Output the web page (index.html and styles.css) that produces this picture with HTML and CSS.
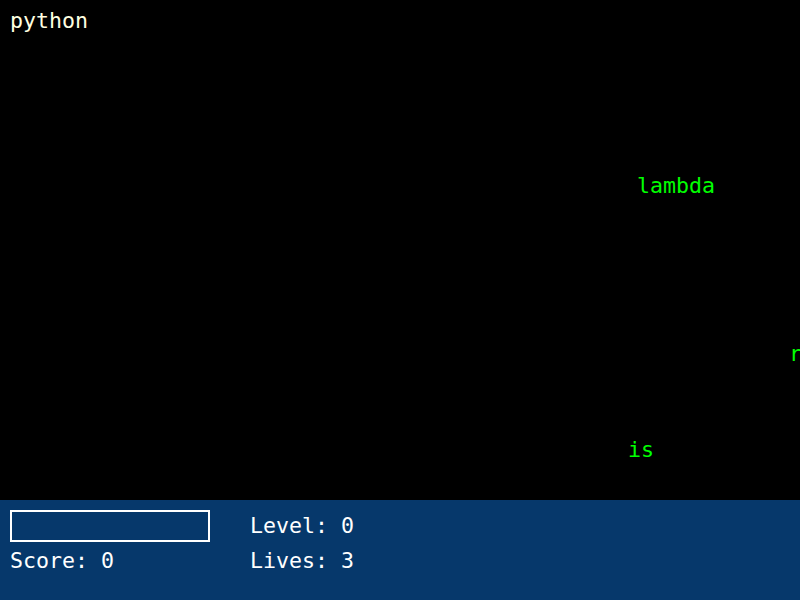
FILE: index.html
```html
<!DOCTYPE html>
<html>
<head>
<meta charset="utf-8">
<link rel="stylesheet" href="styles.css">
</head>
<body>
<div class="game">
  <div class="typed">python</div>
  <div class="word" style="left:637px; top:173px;">lambda</div>
  <div class="word" style="left:789px; top:341px;">r</div>
  <div class="word" style="left:628px; top:437px;">is</div>
</div>
<div class="panel">
  <div class="col col-left">
    <div class="input"></div>
    <div class="stat">Score: 0</div>
  </div>
  <div class="col">
    <div class="stat">Level: 0</div>
    <div class="stat">Lives: 3</div>
  </div>
</div>
</body>
</html>
```
FILE: styles.css
```css
html, body {
  margin: 0;
  padding: 0;
  background: #000;
  width: 800px;
  height: 600px;
  overflow: hidden;
  font-family: "DejaVu Sans Mono", "Liberation Mono", monospace;
  font-size: 21.6px;
}
.game {
  position: relative;
  height: 500px;
  overflow: hidden;
}
.typed {
  color: #ffffe0;
  padding: 8px 0 0 10px;
  line-height: 26px;
}
.word {
  position: absolute;
  color: #00ff00;
  line-height: 26px;
  white-space: nowrap;
}
.panel {
  height: 100px;
  background: #06386b;
  display: flex;
  padding: 10px 0 0 10px;
  box-sizing: border-box;
  gap: 40px;
  color: #fff;
}
.col {
  display: flex;
  flex-direction: column;
}
.col-left {
  width: 200px;
  gap: 6px;
}
.input {
  width: 200px;
  height: 32px;
  box-sizing: border-box;
  border: 2px solid #fff;
}
.stat {
  line-height: 26px;
}
.col:not(.col-left) .stat:first-child {
  margin-top: 3px;
  margin-bottom: 9px;
}
```
